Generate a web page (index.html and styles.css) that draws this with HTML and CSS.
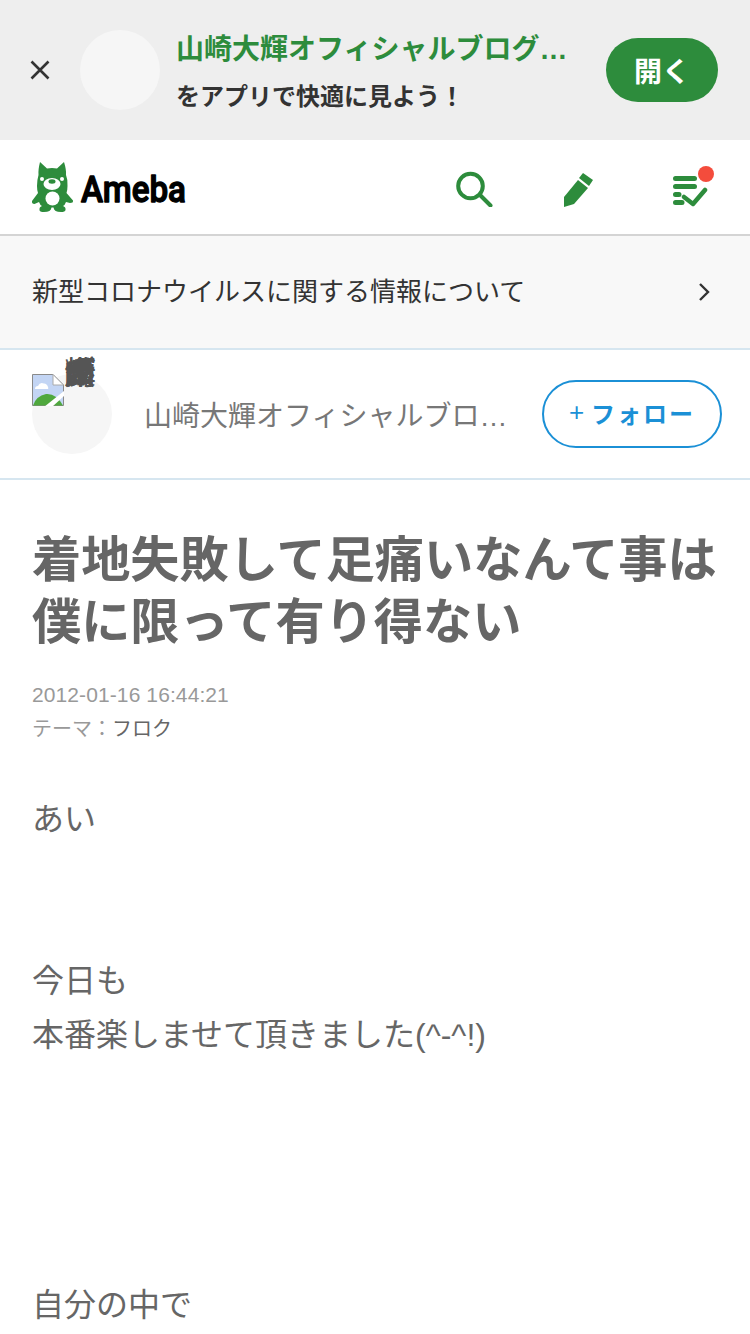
FILE: index.html
```html
<!DOCTYPE html>
<html lang="ja">
<head>
<meta charset="utf-8">
<title>着地失敗して足痛いなんて事は僕に限って有り得ない</title>
<link rel="stylesheet" href="styles.css">
</head>
<body>
<div class="page">
  <section class="banner">
    <svg class="banner-close" viewBox="0 0 20 20" width="20" height="20"><path d="M1.5 1.5L18.500 18.500M18.500 1.500L1.500 18.500" fill="none" stroke="#333" stroke-width="2.600"/></svg>
    <div class="banner-avatar"></div>
    <div class="banner-text">
      <div class="banner-title">山崎大輝オフィシャルブログ…</div>
      <div class="banner-sub">をアプリで快適に見よう！</div>
    </div>
    <div class="banner-open">開く</div>
  </section>

  <header class="topbar">
    <div class="logo">
      <svg class="mascot" viewBox="0 0 46 54" width="46" height="54">
        <path fill="#2d8c3c" d="M10 2L17 8.500Q22 7.500 27 8.500L34 2Q36.500 10 36 15Q38 20 37.500 26Q37.500 30 36.500 33L43 40.500Q43.500 43 40 43L36 42Q35 45 33 46Q36 47 35.500 50Q35 52 31 52Q24 52 23.500 47.500H21.500Q21 52 14 52Q9.500 52 9.500 50Q9 47 12 46Q10 45 9 42L4.500 44Q1.500 44 2 41L8 33Q7 30 7 26Q7 20 8.500 15Q8 10 10 2Z"/>
        <ellipse cx="22" cy="24" rx="8.500" ry="6" fill="#fff"/>
        <circle cx="12" cy="19" r="2" fill="#fff"/>
        <circle cx="32" cy="19" r="2" fill="#fff"/>
        <ellipse cx="22" cy="21.500" rx="3.500" ry="2.200" fill="#2d8c3c"/>
        <circle cx="22.500" cy="38.500" r="7" fill="#fff"/>
      </svg>
      <svg class="wordmark" viewBox="0 0 120 40" width="120" height="40"><text class="wordmark-text" x="1" y="35" textLength="105" lengthAdjust="spacingAndGlyphs">Ameba</text></svg>
    </div>
    <nav class="top-icons">
      <svg class="icon" viewBox="0 0 40 40" width="40" height="40"><circle cx="16.500" cy="19" r="12.300" fill="none" stroke="#2d8c3c" stroke-width="4"/><path d="M26 28L36.500 38.500" stroke="#2d8c3c" stroke-width="4" stroke-linecap="round"/></svg>
      <svg class="icon" viewBox="0 0 40 40" width="40" height="40"><path fill="#2d8c3c" d="M19 13L29 21L15 37L5 40V30Z"/><path fill="#2d8c3c" d="M24 6L34 13L30 19L20 11Z"/></svg>
      <span class="icon-wrap">
        <svg class="icon" viewBox="0 0 40 40" width="40" height="40"><g fill="none" stroke="#2d8c3c" stroke-width="5" stroke-linecap="round"><path d="M6.500 11.500H25.500M6.500 19.500H25.500"/><path d="M6.500 27.500H10M6.500 35.500H13"/></g><path d="M15 30L24 37L36 23" fill="none" stroke="#2d8c3c" stroke-width="4.500" stroke-linecap="round" stroke-linejoin="round"/></svg>
        <span class="badge"></span>
      </span>
    </nav>
  </header>

  <a class="notice">
    <span class="notice-text">新型コロナウイルスに関する情報について</span>
    <svg viewBox="0 0 12 20" width="12" height="20"><path d="M2 2L10 10L2 18" fill="none" stroke="#333" stroke-width="2.400"/></svg>
  </a>

  <section class="blog-head">
    <div class="avatar">
      <svg class="broken" viewBox="0 0 32 32" width="32" height="32">
        <path d="M.5.500H21L31.500 11V31.500H.5Z" fill="#c3d5f4" stroke="#8a8a8a"/>
        <path d="M21 .5V11H31.500Z" fill="#fff" stroke="#aaa"/>
        <path d="M3 15Q3 12 6 12Q8 7.500 12 9.500Q15 9.500 16 13Q17 15 15 15Z" fill="#fff"/>
        <path d="M1 31.500Q4 22 14 20Q24 19 31 31.500Z" fill="#4fa83d"/>
        <path d="M12 33L32 17V22L20 33Z" fill="#fff"/>
      </svg>
      <span class="alt-text">山崎大輝オフィシャルブログ</span>
    </div>
    <div class="blog-name">山崎大輝オフィシャルブロ…</div>
    <div class="follow"><span class="plus">+</span><span class="follow-label">フォロー</span></div>
  </section>

  <article class="entry">
    <h1 class="entry-title">着地失敗して足痛いなんて事は僕に限って有り得ない</h1>
    <div class="entry-date">2012-01-16 16:44:21</div>
    <div class="entry-theme">テーマ：<span class="theme-link">フロク</span></div>
    <div class="entry-body">あい<br><br><br>今日も<br>本番楽しませて頂きました(^-^!)<br><br><br><br><br>自分の中で</div>
  </article>
</div>
</body>
</html>
```
FILE: styles.css
```css
* { box-sizing: border-box; }
html, body { margin: 0; padding: 0; }
body {
  background: #fff;
  font-family: "Liberation Sans", "Noto Sans CJK JP", sans-serif;
  color: #666;
}
.page { width: 750px; height: 1334px; overflow: hidden; }

.banner {
  height: 140px;
  background: #eee;
  display: flex;
  align-items: center;
  padding: 0 32px 0 30px;
}
.banner-close { flex: none; }
.banner-avatar {
  flex: none;
  width: 80px;
  height: 80px;
  border-radius: 50%;
  background: #f6f6f6;
  margin-left: 30px;
}
.banner-text { flex: 1; min-width: 0; margin-left: 16px; padding-top: 3px; }
.banner-title {
  font-size: 28px;
  font-weight: 700;
  line-height: 40px;
  color: #2d8c3c;
  white-space: nowrap;
  overflow: hidden;
}
.banner-sub {
  font-size: 24px;
  font-weight: 700;
  line-height: 34px;
  color: #333;
  margin-top: 10px;
}
.banner-open {
  flex: none;
  width: 112px;
  height: 64px;
  border-radius: 32px;
  background: #2d8c3c;
  color: #fff;
  font-size: 28px;
  font-weight: 700;
  display: flex;
  align-items: center;
  justify-content: center;
}

.topbar {
  height: 96px;
  border-bottom: 2px solid #d4d4d4;
  display: flex;
  align-items: center;
  justify-content: space-between;
  padding: 0 41px 0 30px;
}
.logo { display: flex; align-items: center; }
.mascot { flex: none; }
.wordmark { flex: none; margin-left: 4px; }
.wordmark-text {
  font-family: "Roboto", sans-serif;
  font-size: 36px;
  font-weight: 500;
  fill: #000;
  stroke: #000;
  stroke-width: 1.300px;
  stroke-linejoin: round;
}
.top-icons { display: flex; align-items: center; gap: 65px; }
.top-icons .icon-wrap { margin-left: 5px; }
.icon { display: block; }
.icon-wrap { position: relative; display: block; }
.badge {
  position: absolute;
  right: -5px;
  top: -1px;
  width: 16px;
  height: 16px;
  border-radius: 50%;
  background: #f44c3c;
}

.notice {
  height: 114px;
  background: #f8f8f8;
  border-bottom: 2px solid #d6e6f0;
  display: flex;
  align-items: center;
  justify-content: space-between;
  padding: 0 40px 0 32px;
  font-size: 26px;
  color: #333;
}
.notice-text { padding-bottom: 6px; }

.blog-head {
  height: 130px;
  border-bottom: 2px solid #d6e6f0;
  display: flex;
  align-items: center;
  padding: 0 28px 0 32px;
}
.avatar {
  flex: none;
  position: relative;
  width: 80px;
  height: 80px;
  border-radius: 50%;
  background: #f6f6f6;
}
.broken { display: block; }
.alt-text {
  position: absolute;
  left: 32px;
  top: -1px;
  width: 32px;
  font-size: 32px;
  line-height: 0;
  color: #555;
  word-break: break-all;
}
.blog-name {
  flex: 1;
  min-width: 0;
  margin-left: 32px;
  margin-right: 34px;
  font-size: 28px;
  color: #777;
  white-space: nowrap;
}
.follow {
  flex: none;
  width: 180px;
  height: 68px;
  border: 2px solid #1b90d6;
  border-radius: 34px;
  display: flex;
  align-items: center;
  justify-content: center;
  gap: 7px;
  padding-bottom: 4px;
  color: #1b90d6;
  font-size: 24px;
  font-weight: 700;
}
.follow-label { letter-spacing: 2px; }
.plus { font-weight: 400; font-size: 26px; }

.entry { padding: 49px 24px 0 32px; }
.entry-title {
  margin: 0;
  font-size: 49.200px;
  line-height: 62px;
  font-weight: 700;
  color: #666;
}
.entry-date {
  margin-top: 25px;
  font-size: 21px;
  line-height: 33px;
  letter-spacing: .1px;
  color: #999;
}
.entry-theme {
  padding-top: 2px;
  font-size: 20px;
  line-height: 33px;
  color: #999;
}
.theme-link { color: #666; }
.entry-body {
  margin-top: 46px;
  font-size: 32px;
  line-height: 54px;
  color: #666;
}
```
